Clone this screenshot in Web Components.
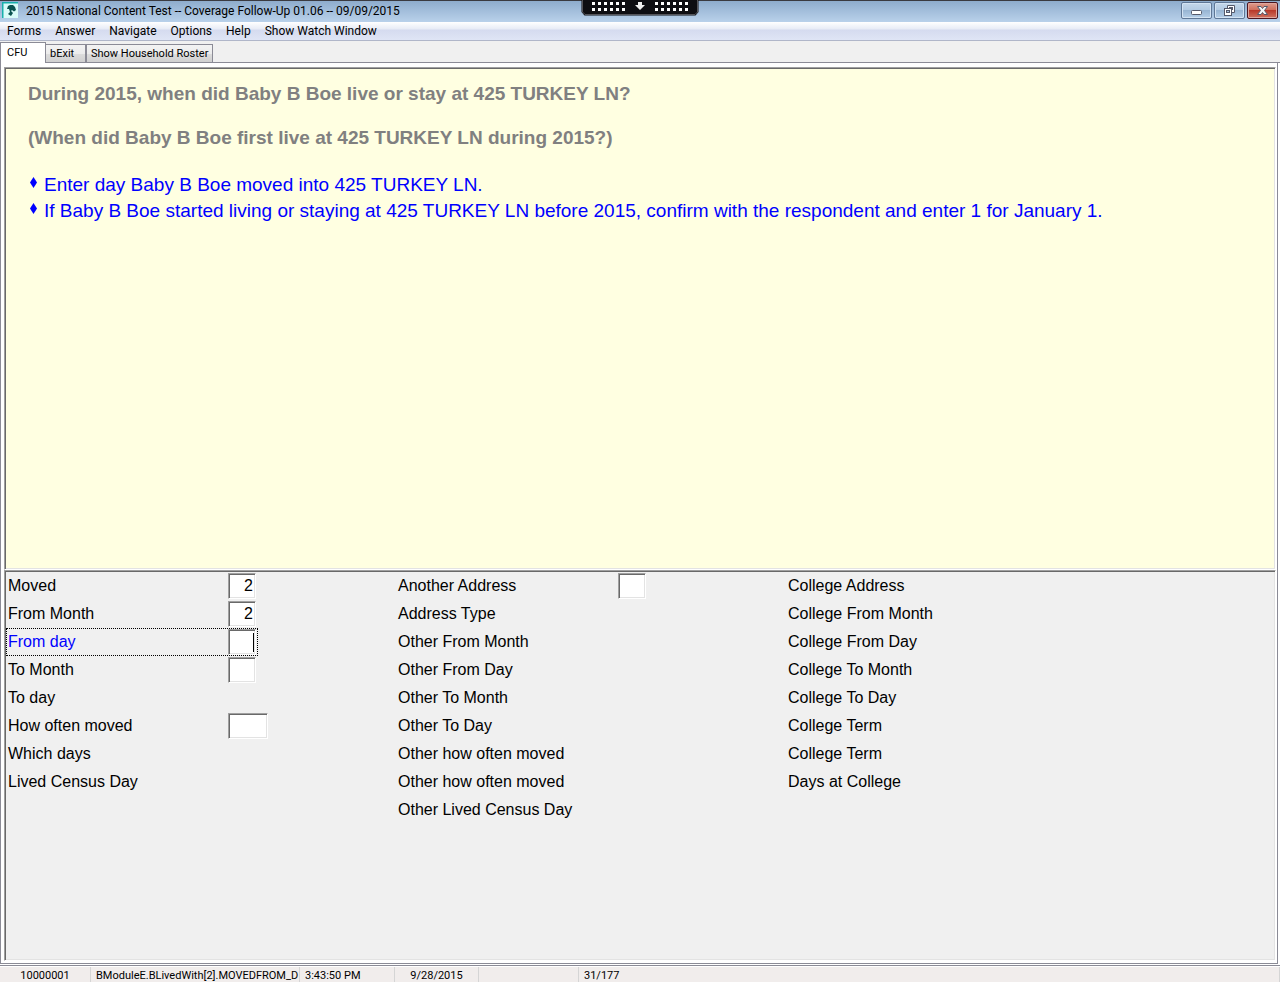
<!DOCTYPE html>
<html lang="en">
<head>
  <meta charset="utf-8">
  <title>2015 National Content Test</title>
  <style>
    html, body {
      height: 100%;
      margin: 0;
    }
  </style>
</head>
<body>
  <survey-window></survey-window>

  <script>
    class TitleBar extends HTMLElement {
      constructor () {
        super()
        this.shadow = this.attachShadow({ mode: 'open' })
      }

      connectedCallback () {
        this.render()
      }

      render () {
        this.shadow.innerHTML =
          /*html*/`
          <style>
            * {
              box-sizing: border-box;
            }

            :host {
              display: block;
              position: relative;
              height: 22px;
              border-top: 1px solid #3a3a40;
              background: linear-gradient(#8eaccc, #a4bfdc 50%, #b9d1ea);
              box-sizing: border-box;
            }

            header {
              display: flex;
              align-items: flex-start;
              padding: 1px 2px 0;
            }

            h1 {
              flex: 1;
              margin: 0 0 0 8px;
              font: 400 12px/18px Roboto, "Open Sans", sans-serif;
              color: #000;
            }

            .logo {
              display: block;
              width: 16px;
              height: 16px;
            }

            .buttons {
              display: flex;
              gap: 2px;
            }

            button {
              display: grid;
              place-items: center;
              width: 31px;
              height: 17px;
              padding: 0;
              border: 1px solid #5f7796;
              border-radius: 2px;
              background: linear-gradient(#c4d7ea, #b3cbe3 45%, #98b5d3 50%, #b5cfe8);
              box-shadow: inset 0 0 0 1px #d3e3f3;
            }

            .close {
              border-color: #4d1620;
              background: linear-gradient(#dd9c8e, #cf6f5c 45%, #b8392a 50%, #cf7260);
              box-shadow: inset 0 0 0 1px #e0a79d;
            }

            .grabber {
              position: absolute;
              top: -1px;
              left: 50%;
              width: 118px;
              height: 17px;
              margin-left: -59px;
            }
          </style>

          <header>
            <svg class="logo" viewBox="0 0 16 16" aria-hidden="true">
              <rect width="16" height="16" fill="#d9fbf8"/>
              <path d="M0 0H16V1.500H1.500V16H0Z" fill="#18b0ac"/>
              <path d="M5 7L6 4L8 3H11L13 5L14 8L12 9.500L10 8L9 9L11 11L9 14L6 12L8 10L7 7Z" fill="#0b5350"/>
            </svg>
            <h1>2015 National Content Test -- Coverage Follow-Up 01.06 -- 09/09/2015</h1>
            <div class="buttons">
              <button type="button" aria-label="Minimize">
                <svg width="13" height="11" viewBox="0 0 13 11">
                  <rect x="1.5" y="5.5" width="10" height="4" rx="1" fill="#fff" stroke="#55596a"/>
                </svg>
              </button>
              <button type="button" aria-label="Restore">
                <svg width="13" height="11" viewBox="0 0 13 11">
                  <path d="M4.5 .5H11.5V7.5H4.5Z" fill="#fff" stroke="#55596a"/>
                  <rect x="6.5" y="2.5" width="3" height="2" fill="#a9c3de" stroke="#55596a"/>
                  <rect x="1.5" y="3.5" width="7" height="7" fill="#fff" stroke="#55596a"/>
                  <rect x="3.5" y="5.5" width="3" height="2" fill="#a9c3de" stroke="#55596a"/>
                </svg>
              </button>
              <button type="button" class="close" aria-label="Close">
                <svg width="13" height="11" viewBox="0 0 13 11">
                  <path d="M1.5 1.5H5L6.5 3.5L8 1.5H11.5L8.5 5.5L11.5 9.5H8L6.5 7.5L5 9.5H1.5L4.5 5.5Z" fill="#f4f4f4" stroke="#55596a"/>
                </svg>
              </button>
            </div>
          </header>

          <svg class="grabber" viewBox="0 0 118 17" aria-hidden="true">
            <path d="M.5 0V12L3.5 15.5H114.5L117.5 12V0Z" fill="#0e0e12"/>
            <path d="M1.5 0V12L4 14.5H114L116.5 12V0" fill="none" stroke="#55555a"/>
            <path d="M11 3.5H45M11 9.5H45M74 3.5H108M74 9.5H108" stroke="#fff" stroke-width="3" stroke-dasharray="3 3"/>
            <path d="M57 2H61V5H64L59 10L54 5H57Z" fill="#f0f0f0"/>
          </svg>
        `
      }
    }

    customElements.define('title-bar', TitleBar)

    class MenuBar extends HTMLElement {
      constructor () {
        super()
        this.shadow = this.attachShadow({ mode: 'open' })
        this.items = ['Forms', 'Answer', 'Navigate', 'Options', 'Help', 'Show Watch Window']
      }

      connectedCallback () {
        this.render()
      }

      render () {
        this.shadow.innerHTML =
          /*html*/`
          <style>
            :host {
              display: block;
              border-bottom: 1px solid #b0b6c9;
              background: linear-gradient(#fff, #e8ecf6 38%, #d5dbef 45%, #dfe5f5);
            }

            nav {
              display: flex;
              gap: 14px;
              padding: 1px 0 0 7px;
            }

            button {
              margin: 0;
              padding: 0;
              border: 0;
              background: none;
              font: 12px/17px Roboto, "Open Sans", sans-serif;
              color: #000;
            }
          </style>

          <nav></nav>
        `

        const nav = this.shadow.querySelector('nav')

        this.items.forEach(item => {
          const button = document.createElement('button')
          button.type = 'button'
          button.textContent = item
          nav.appendChild(button)
        })
      }
    }

    customElements.define('menu-bar', MenuBar)

    class FormTabs extends HTMLElement {
      constructor () {
        super()
        this.shadow = this.attachShadow({ mode: 'open' })
      }

      connectedCallback () {
        this.render()
      }

      render () {
        this.shadow.innerHTML =
          /*html*/`
          <style>
            * {
              box-sizing: border-box;
            }

            :host {
              display: block;
              background: #f0f0f0;
            }

            .tabs {
              display: flex;
              align-items: flex-end;
              height: 22px;
              box-shadow: inset 0 -1px #8b8b96;
            }

            button {
              height: 19px;
              padding: 0 4px;
              border: 1px solid #8b8b96;
              border-left-width: 0;
              background: linear-gradient(#f3f3f3, #ececec 50%, #dcdcdc 55%, #d0d0d0);
              font: 11px/17px Roboto, "Open Sans", sans-serif;
              text-align: left;
              color: #000;
            }

            button + button {
              min-width: 40px;
            }

            button:last-child {
              min-width: 124px;
              border-left-width: 1px;
            }

            .active {
              width: 46px;
              height: 21px;
              padding: 0 6px 2px;
              border-left-width: 1px;
              border-bottom: 0;
              background: #fff;
            }
          </style>

          <div class="tabs" role="tablist">
            <button type="button" role="tab" aria-selected="true" class="active">CFU</button>
            <button type="button" role="tab" aria-selected="false">bExit</button>
            <button type="button" role="tab" aria-selected="false">Show Household Roster</button>
          </div>
        `
      }
    }

    customElements.define('form-tabs', FormTabs)

    class QuestionPanel extends HTMLElement {
      constructor () {
        super()
        this.shadow = this.attachShadow({ mode: 'open' })
      }

      connectedCallback () {
        this.render()
      }

      render () {
        this.shadow.innerHTML =
          /*html*/`
          <style>
            :host {
              display: block;
              box-sizing: border-box;
              padding: 15px 23px 13px;
              border: 1px solid #a0a0a0;
              border-right-color: #fff;
              border-bottom-color: #fff;
              box-shadow: inset 1px 1px #696969, inset -1px -1px #e3e3e3;
              background: #ffffe1;
              font-family: "Liberation Sans", Arial, sans-serif;
              font-size: 19px;
            }

            ::slotted(h2) {
              margin: 0 0 22px;
              font-size: 19px;
              line-height: 22px;
              color: #808080;
            }

            ul {
              margin: 0;
              padding: 1px 0 0;
              list-style: none;
              line-height: 26px;
              color: #0000ff;
            }

            li {
              display: flex;
              gap: 7px;
            }

            svg {
              flex: none;
              margin: 5px 0 0 2px;
            }
          </style>

          <slot></slot>
          <ul></ul>
        `

        const list = this.shadow.querySelector('ul')
        const instructions = [
          'Enter day Baby B Boe moved into 425 TURKEY LN.',
          'If Baby B Boe started living or staying at 425 TURKEY LN before 2015, confirm with the respondent and enter 1 for January 1.'
        ]

        instructions.forEach(text => {
          const item = document.createElement('li')
          item.innerHTML = '<svg width="7" height="11" viewBox="0 0 7 11" aria-hidden="true"><path d="M3.500 0L7 5.500L3.500 11L0 5.500Z" fill="#0000ff"/></svg>'
          const span = document.createElement('span')
          span.textContent = text
          item.appendChild(span)
          list.appendChild(item)
        })
      }
    }

    customElements.define('question-panel', QuestionPanel)

    class FieldPanel extends HTMLElement {
      constructor () {
        super()
        this.shadow = this.attachShadow({ mode: 'open' })
        this.columns = []
      }

      connectedCallback () {
        this.loadData()
        this.render()
      }

      loadData () {
        this.columns = [
          [
            { label: 'Moved', value: '2' },
            { label: 'From Month', value: '2' },
            { label: 'From day', value: '', current: true },
            { label: 'To Month', value: '' },
            { label: 'To day' },
            { label: 'How often moved', value: '', wide: true },
            { label: 'Which days' },
            { label: 'Lived Census Day' }
          ],
          [
            { label: 'Another Address', value: '' },
            { label: 'Address Type' },
            { label: 'Other From Month' },
            { label: 'Other From Day' },
            { label: 'Other To Month' },
            { label: 'Other To Day' },
            { label: 'Other how often moved' },
            { label: 'Other how often moved' },
            { label: 'Other Lived Census Day' }
          ],
          [
            { label: 'College Address' },
            { label: 'College From Month' },
            { label: 'College From Day' },
            { label: 'College To Month' },
            { label: 'College To Day' },
            { label: 'College Term' },
            { label: 'College Term' },
            { label: 'Days at College' }
          ]
        ]
      }

      render () {
        this.shadow.innerHTML =
          /*html*/`
          <style>
            * {
              box-sizing: border-box;
            }

            :host {
              display: block;
              box-sizing: border-box;
              padding: 1px;
              border: 1px solid #a0a0a0;
              border-right-color: #fff;
              border-bottom-color: #fff;
              box-shadow: inset 1px 1px #696969, inset -1px -1px #e3e3e3;
              background: #f0f0f0;
              font: 16px/28px "Liberation Sans", Arial, sans-serif;
              color: #000;
            }

            form {
              display: flex;
            }

            .column {
              flex: 0 1 390px;
              display: flex;
              flex-direction: column;
              align-items: flex-start;
            }

            .field {
              display: flex;
              align-items: center;
              height: 28px;
              padding: 0 2px;
            }

            .field > :first-child {
              width: 220px;
            }

            .current {
              outline: 1px dotted #000;
              outline-offset: -1px;
              color: #0000ff;
            }

            input {
              width: 28px;
              height: 26px;
              margin: 0;
              padding: 0 2px;
              border: 1px solid #a0a0a0;
              border-right-color: #fff;
              border-bottom-color: #fff;
              border-radius: 0;
              box-shadow: inset 1px 1px #696969, inset -1px -1px #e3e3e3;
              background: #fff;
              font: inherit;
              line-height: 20px;
              text-align: right;
              color: #000;
            }

            .current input {
              background: linear-gradient(#000, #000) right 1px center / 1px 19px no-repeat #fff;
            }

            .wide {
              width: 40px;
            }
          </style>

          <form></form>
        `

        const form = this.shadow.querySelector('form')

        this.columns.forEach((fields, columnIndex) => {
          const column = document.createElement('div')
          column.classList.add('column')
          form.appendChild(column)

          fields.forEach((field, index) => {
            const row = document.createElement('div')
            row.classList.add('field')
            row.classList.toggle('current', Boolean(field.current))
            column.appendChild(row)

            const hasInput = field.value !== undefined
            const label = document.createElement(hasInput ? 'label' : 'span')
            label.textContent = field.label
            row.appendChild(label)

            if (hasInput) {
              const input = document.createElement('input')
              input.type = 'text'
              input.id = `field-${columnIndex}-${index}`
              input.value = field.value
              input.classList.toggle('wide', Boolean(field.wide))
              label.htmlFor = input.id
              row.appendChild(input)
            }
          })
        })
      }
    }

    customElements.define('field-panel', FieldPanel)

    class StatusBar extends HTMLElement {
      constructor () {
        super()
        this.shadow = this.attachShadow({ mode: 'open' })
      }

      connectedCallback () {
        this.render()
      }

      render () {
        this.shadow.innerHTML =
          /*html*/`
          <style>
            :host {
              display: block;
              border-top: 1px solid #8b8b96;
              background: #f1edec;
            }

            footer {
              display: grid;
              grid-template-columns: 91px 209px 95px 84px 100px 1fr;
              border-top: 1px solid #fff;
              font: 11px/18px Roboto, "Open Sans", sans-serif;
              height: 15px;
              color: #000;
            }

            span {
              box-sizing: border-box;
              height: 15px;
              padding-left: 5px;
              border-right: 1px solid #d5d5d5;
              white-space: nowrap;
            }

            .center {
              padding-left: 0;
              text-align: center;
            }
          </style>

          <footer>
            <span class="center">10000001</span>
            <span>BModuleE.BLivedWith[2].MOVEDFROM_D</span>
            <span>3:43:50 PM</span>
            <span class="center">9/28/2015</span>
            <span></span>
            <span>31/177</span>
          </footer>
        `
      }
    }

    customElements.define('status-bar', StatusBar)

    class SurveyWindow extends HTMLElement {
      constructor () {
        super()
        this.shadow = this.attachShadow({ mode: 'open' })
      }

      connectedCallback () {
        this.render()
      }

      render () {
        this.shadow.innerHTML =
          /*html*/`
          <style>
            :host {
              display: flex;
              flex-direction: column;
              min-height: 100vh;
              background: #fff;
            }

            main {
              flex: 1;
              display: flex;
              flex-direction: column;
              margin: 0 2px 1px 0;
              padding: 4px 1px 2px 3px;
              border: 1px solid #8b8b96;
              border-top: 0;
            }

            /* the question takes a little more than half of the height */
            question-panel {
              flex: 473 0 0;
            }

            field-panel {
              flex: 387 0 0;
            }
          </style>

          <title-bar></title-bar>
          <menu-bar></menu-bar>
          <form-tabs></form-tabs>
          <main>
            <question-panel>
              <h2>During 2015, when did Baby B Boe live or stay at 425 TURKEY LN?</h2>
              <h2>(When did Baby B Boe first live at 425 TURKEY LN during 2015?)</h2>
            </question-panel>
            <field-panel></field-panel>
          </main>
          <status-bar></status-bar>
        `
      }
    }

    customElements.define('survey-window', SurveyWindow)
  </script>
</body>
</html>
